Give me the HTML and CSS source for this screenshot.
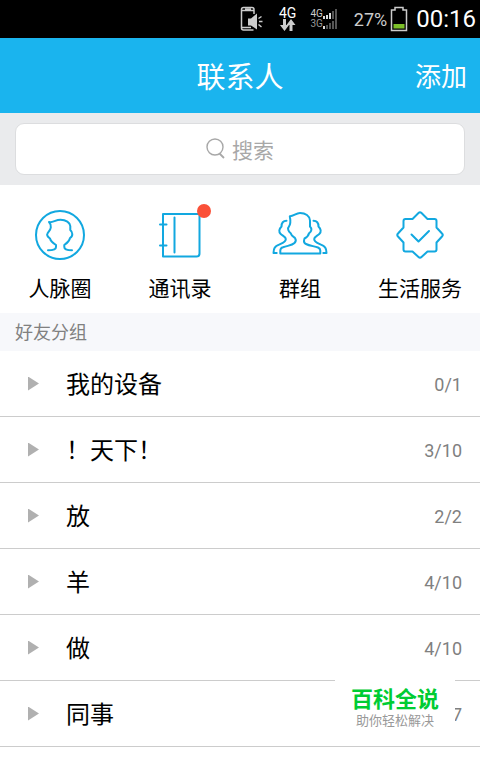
FILE: index.html
```html
<!DOCTYPE html>
<html lang="zh-CN">
<head>
<meta charset="utf-8">
<meta name="viewport" content="width=device-width, initial-scale=1">
<title>联系人</title>
<link rel="stylesheet" href="styles.css">
</head>
<body>
<div class="status">
  <svg class="status-phone" width="24" height="26" viewBox="0 0 24 26" aria-hidden="true">
    <path d="M15 8V3.500Q15 1.500 13 1.500H4.500Q2.500 1.500 2.500 3.500V22Q2.500 24 4.500 24H14.500" fill="none" stroke="#ccc" stroke-width="1.500"/>
    <path d="M2 4.500H15M6 3H12M2 21.500H12" stroke="#ccc" stroke-width="1.500"/>
    <path d="M9 12.500H12L18 7.500V23.500L12 19.500H9Z" fill="#ccc"/>
    <path d="M19.500 12.500L22.500 10.500M20 15.500H23.500M19.500 18.500L22.500 21" stroke="#ccc" stroke-width="1.500"/>
  </svg>
  <div class="data">
    <span>4G</span>
    <svg width="16" height="12" viewBox="0 0 16 12" aria-hidden="true">
      <path d="M3 0H6V6H9L4.500 12L0 6H3ZM9.500 12H12.500V6H15.500L11 0L6.500 6H9.500Z" fill="#ccc"/>
    </svg>
  </div>
  <div class="signals">
    <div class="signal">
      <span>4G</span>
      <svg width="14" height="10" viewBox="0 0 14 10" aria-hidden="true">
        <path d="M0 7h2v3H0zM3 6h2v4H3zM6 4h2v6H6z" fill="#ddd"/>
        <path d="M9 2h2v8H9zM12 0h2v10h-2z" fill="#555"/>
      </svg>
    </div>
    <div class="signal signal-dim">
      <span>3G</span>
      <svg width="14" height="10" viewBox="0 0 14 10" aria-hidden="true">
        <path d="M0 7h2v3H0z" fill="#ddd"/>
        <path d="M3 6h2v4H3zM6 4h2v6H6zM9 2h2v8H9zM12 0h2v10h-2z" fill="#555"/>
      </svg>
    </div>
  </div>
  <span class="percent">27%</span>
  <svg class="battery" width="18" height="26" viewBox="0 0 18 26" aria-hidden="true">
    <path d="M5 4V1.500H13V4H16.500V24.500H1.500V4Z" fill="none" stroke="#ccc" stroke-width="1.500"/>
    <path d="M3.500 18h11v4.500h-11z" fill="#7cbf28"/>
  </svg>
  <time class="clock">00:16</time>
</div>

<header class="header">
  <h1>联系人</h1>
  <button class="add" type="button">添加</button>
</header>

<div class="search">
  <label class="search-box">
    <svg width="20" height="22" viewBox="0 0 20 22" fill="none" stroke="#a8a8a8" stroke-width="1.400" aria-hidden="true">
      <circle cx="9" cy="9" r="8"/><path d="M13.500 15.500L18 20" stroke-width="1.800"/>
    </svg>
    <input type="text" placeholder="搜索" aria-label="搜索">
  </label>
</div>

<nav class="shortcuts">
  <a href="#circle">
    <svg width="56" height="56" viewBox="0 0 56 56" aria-hidden="true">
      <circle cx="28" cy="28" r="24"/>
      <path d="M16 43.300C21 43.300 24 42.500 24 40V38C21 36 18.500 34 18 31.500C16 30 14.500 28 15.500 26.500C17 24 18.500 23 18.800 20.500C19 18.500 18.500 16.500 17 15C20.500 16 23.500 12.800 28.500 12.800C34 12.800 38 15.500 38.300 19V23C40.500 25 41.500 29 38 31C37.500 34 35 36 32.300 38V40C32.300 42.500 35 43.300 40 43.300"/>
    </svg>
    <span>人脉圈</span>
  </a>
  <a href="#book">
    <span class="icon-wrap">
      <svg width="56" height="56" viewBox="0 0 56 56" aria-hidden="true">
        <path d="M11 7H47.500V46.500Q47.500 49.500 44.500 49.500H11ZM22.500 10.500V45.500M8 17.500H14.500M8 38.500H14.500"/>
      </svg>
      <i class="dot"></i>
    </span>
    <span>通讯录</span>
  </a>
  <a href="#groups">
    <svg width="56" height="56" viewBox="0 0 56 56" aria-hidden="true">
      <path d="M8.300 46.500V43.500Q8.500 41 11 40.300C16 38.500 20 38.500 22.500 36C24.500 34 24 32.500 23 31C21 29.500 19.200 28.500 18.700 26.300C16.500 24.500 15 21.500 17 19.500C19 17 18.500 13 17.800 9.300C21.500 9.500 24 6 28 6C33.500 6 37.700 9 38 13.500V19.500C40 21.500 40 24.500 37 26.300C36.500 29 34.500 30.500 32.500 31.500C31.800 33.500 31.700 36 34 37C38 39 42 39 46 40.500Q48.300 41.500 48.300 43.500V46.500Z"/>
      <path d="M14.500 13.700C11.500 13.700 9.500 16 9.500 19.500C7 22 6.500 25 8.700 27C11 29 13.500 29.500 13.800 32C14 35 10.500 36 7 37.700C3 39.500 1.500 41 1.500 46H4.700M41.500 13.700C44.500 13.700 46.500 16 46.500 19.500C49 22 49.500 25 47.300 27C45 29 42.500 29.500 42.200 32C42 35 45.500 36 49 37.700C53 39.500 54.500 41 54.500 46H51.300"/>
    </svg>
    <span>群组</span>
  </a>
  <a href="#life">
    <svg width="56" height="56" viewBox="0 0 56 56" aria-hidden="true">
      <path d="M26.500 6Q28 4.500 29.500 6L35.500 12H42.500Q44.500 12 44.500 14V20.500L50 26.500Q51.500 28 50 29.500L44.500 35.500V42.500Q44.500 44.500 42.500 44.500H35.500L29.500 50Q28 51.500 26.500 50L20.500 44.500H13.500Q11.500 44.500 11.500 42.500V35.500L6 29.500Q4.500 28 6 26.500L11.500 20.500V14Q11.500 12 13.500 12H20.500Z"/>
      <path d="M19.500 27.500L26.500 34.500L37 24"/>
    </svg>
    <span>生活服务</span>
  </a>
</nav>

<main>
  <h2 class="section-title">好友分组</h2>
  <ul class="groups">
    <li><button type="button"><i class="arrow"></i><span class="name">我的设备</span><span class="count">0/1</span></button></li>
    <li><button type="button"><i class="arrow"></i><span class="name">！天下！</span><span class="count">3/10</span></button></li>
    <li><button type="button"><i class="arrow"></i><span class="name">放</span><span class="count">2/2</span></button></li>
    <li><button type="button"><i class="arrow"></i><span class="name">羊</span><span class="count">4/10</span></button></li>
    <li><button type="button"><i class="arrow"></i><span class="name">做</span><span class="count">4/10</span></button></li>
    <li>
      <button type="button"><i class="arrow"></i><span class="name">同事</span><span class="count">7</span></button>
      <div class="brand"><strong>百科全说</strong><span>助你轻松解决</span></div>
    </li>
  </ul>
</main>
</body>
</html>
```
FILE: styles.css
```css
* { box-sizing: border-box; }

body {
  margin: 0;
  background: #fff;
  color: #000;
  font-family: Roboto, "Noto Sans CJK SC", sans-serif;
}

button {
  border: 0;
  padding: 0;
  background: none;
  color: inherit;
  font: inherit;
}

.status {
  display: flex;
  align-items: center;
  justify-content: flex-end;
  height: 38px;
  padding-right: 4px;
  background: #000;
  color: #ccc;
}

.status-phone { margin-right: 16px; }

.data {
  display: flex;
  flex-direction: column;
  align-items: center;
  margin-right: 14px;
  color: #fff;
  font-size: 14px;
  line-height: 12px;
}

.signals {
  margin-right: 17px;
  font-size: 10px;
  line-height: 10px;
}

.signal {
  display: flex;
  align-items: center;
}

.signal-dim { color: #999; }

.percent {
  margin-right: 3px;
  font-size: 18px;
}

.battery { margin-right: 8px; }

.clock {
  color: #fff;
  font-size: 24px;
}

.header {
  display: grid;
  grid-template-columns: 1fr auto 1fr;
  align-items: center;
  height: 75px;
  padding: 0 13px 2px;
  background: #1ab4ee;
  color: #fff;
}

.header h1 {
  grid-column: 2;
  margin: 0;
  font-size: 29px;
  font-weight: 400;
}

.add {
  justify-self: end;
  font-size: 26px;
}

.search {
  padding: 10px 15px;
  background: #eaebed;
}

.search-box {
  display: flex;
  align-items: center;
  justify-content: center;
  gap: 6px;
  height: 52px;
  border: 1px solid #dcdddf;
  border-radius: 9px;
  background: #fff;
}

.search-box input {
  field-sizing: content;
  border: 0;
  padding: 0;
  outline: 0;
  background: none;
  font: inherit;
  font-size: 21px;
}

.search-box input::placeholder { color: #a8a8a8; }

.shortcuts {
  display: grid;
  grid-template-columns: repeat(4, 1fr);
  height: 128px;
  padding-top: 22px;
}

.shortcuts a {
  display: flex;
  flex-direction: column;
  align-items: center;
  gap: 10px;
  color: #000;
  font-size: 21px;
  line-height: 32px;
  text-decoration: none;
}

.shortcuts svg {
  display: block;
  fill: none;
  stroke: #12a8e0;
  stroke-width: 2;
  stroke-linecap: round;
  stroke-linejoin: round;
}

.icon-wrap { position: relative; }

.dot {
  position: absolute;
  top: -3px;
  right: -3px;
  width: 14px;
  height: 14px;
  border-radius: 50%;
  background: #fa5038;
}

.section-title {
  margin: 0;
  padding: 2px 15px 0;
  background: #f7f8fb;
  color: #808080;
  font-size: 18px;
  font-weight: 400;
  line-height: 36px;
}

.groups {
  margin: 0;
  padding: 0;
  list-style: none;
}

.groups li {
  position: relative;
  border-bottom: 1px solid #ccc;
}

.groups button {
  display: flex;
  align-items: center;
  width: 100%;
  height: 65px;
  padding: 0 18px 0 28px;
  text-align: left;
}

.arrow {
  width: 11px;
  height: 14px;
  margin-right: 27px;
  background: #b0b0b0;
  clip-path: polygon(0 0, 100% 50%, 0 100%);
}

.name {
  flex: 1;
  padding-bottom: 2px;
  font-size: 24px;
}

.count {
  padding-top: 2px;
  color: #808080;
  font-size: 18px;
}

.brand {
  position: absolute;
  top: -8px;
  right: 25px;
  display: flex;
  flex-direction: column;
  align-items: center;
  width: 120px;
  height: 64px;
  padding-top: 14px;
  background: #fff;
}

.brand strong {
  color: #00cc33;
  font-size: 22px;
  font-weight: 700;
  line-height: 26px;
}

.brand span {
  color: #999;
  font-size: 13px;
  line-height: 16px;
}
```
